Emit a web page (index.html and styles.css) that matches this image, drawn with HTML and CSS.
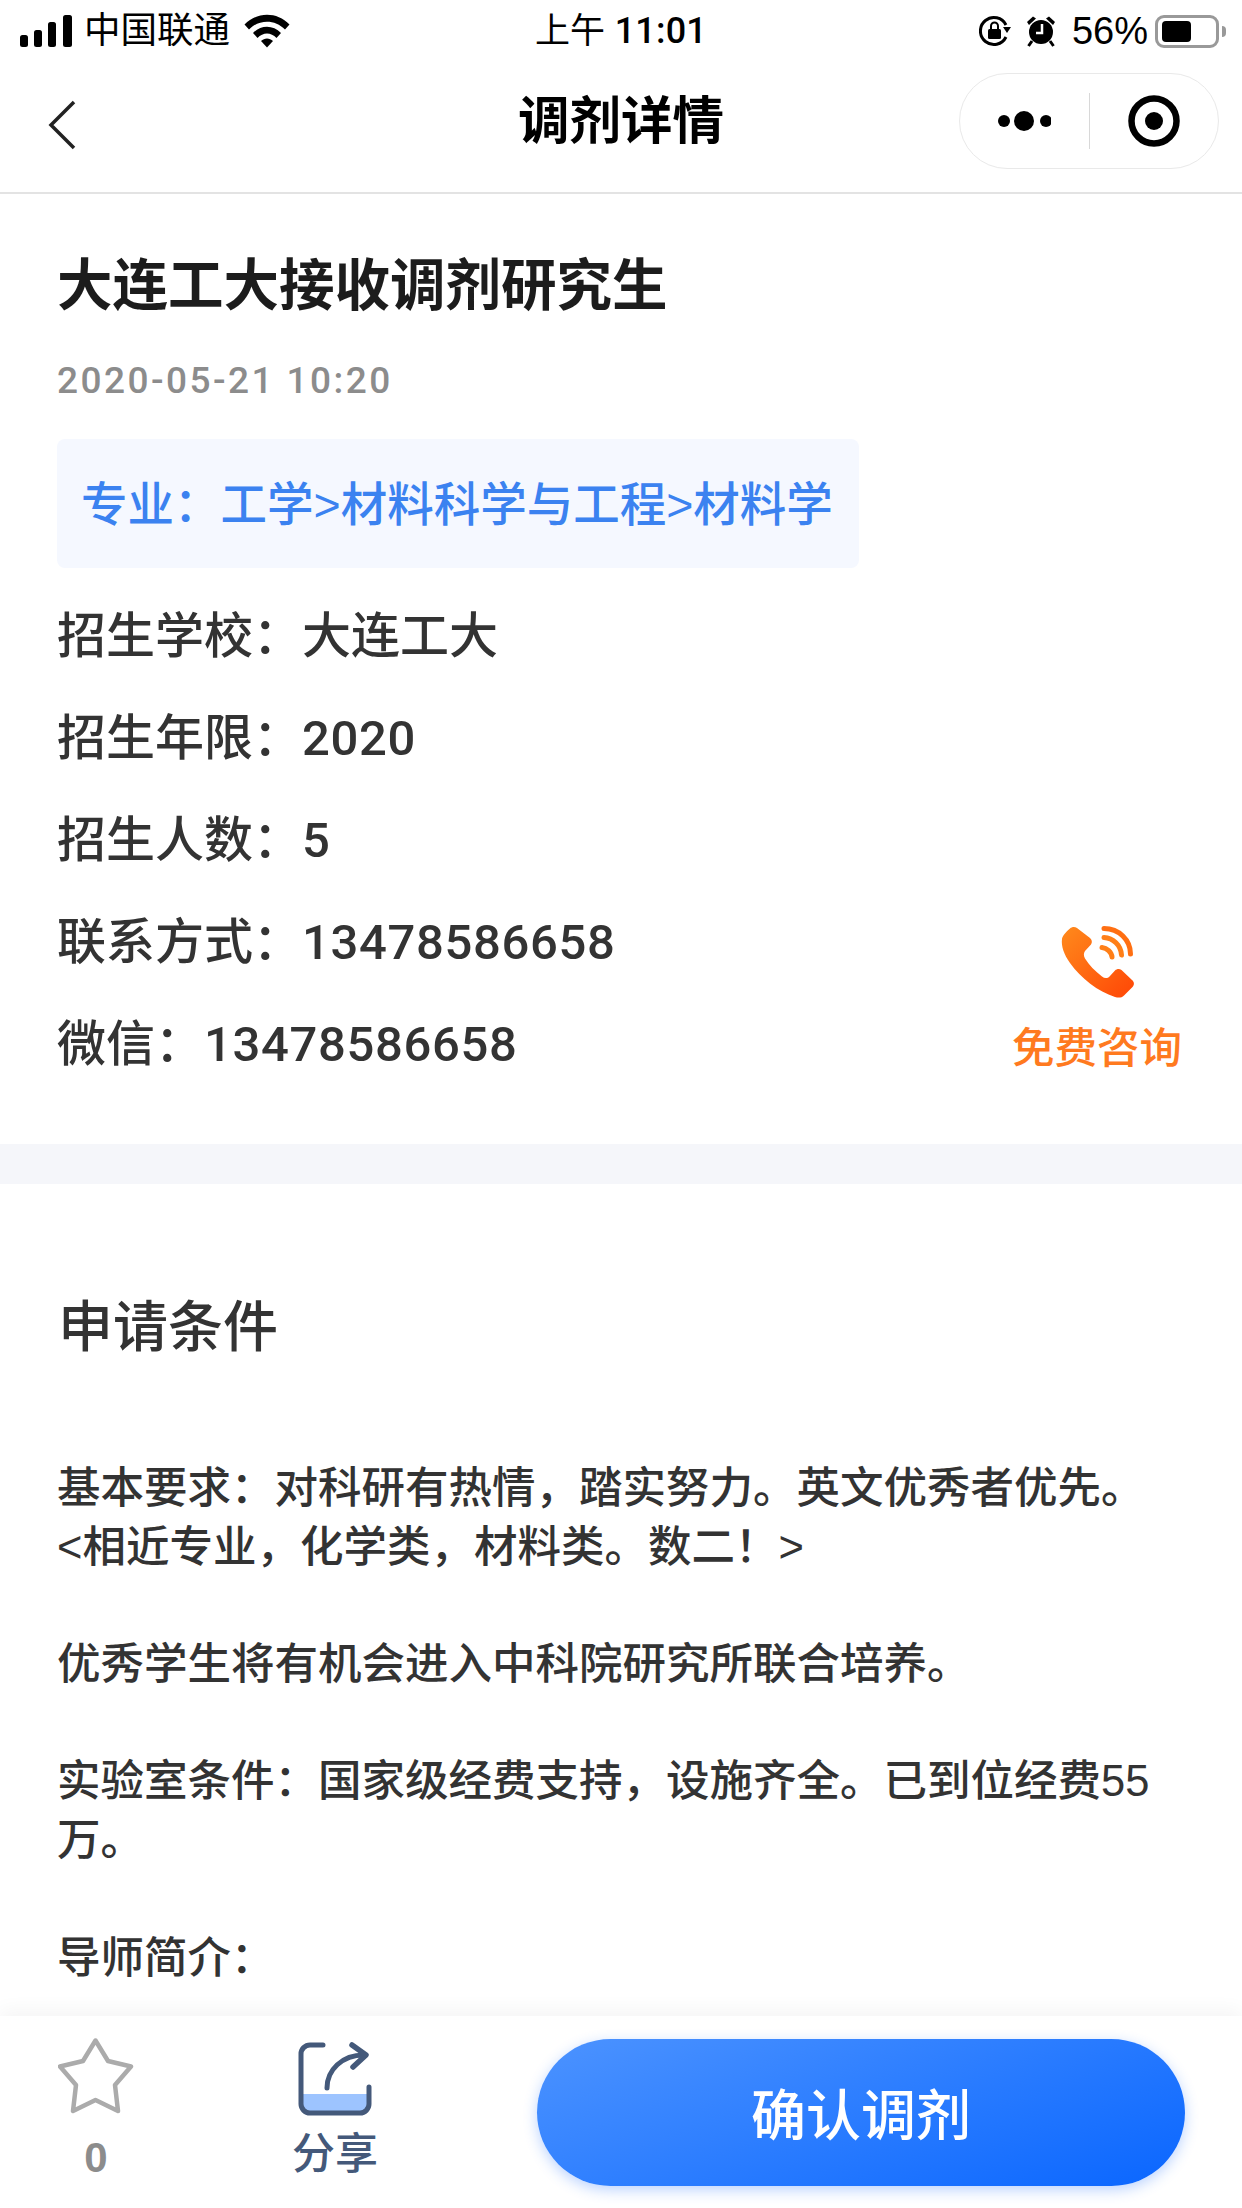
FILE: index.html
```html
<!DOCTYPE html>
<html lang="zh-CN">
<head>
<meta charset="utf-8">
<title>调剂详情</title>
<link rel="stylesheet" href="styles.css">
</head>
<body>
<div class="page">
  <header class="status">
    <div class="status-left">
      <svg class="signal" width="52" height="32" viewBox="0 0 52 32"><rect x="0" y="20" width="8" height="12" rx="2.5"/><rect x="14" y="15" width="8" height="17" rx="2.5"/><rect x="28" y="7" width="8" height="25" rx="2.5"/><rect x="43" y="0" width="9" height="32" rx="2.5"/></svg>
      <span class="carrier">中国联通</span>
      <svg class="wifi" width="46" height="34" viewBox="0 0 46 34"><path d="M0.5 10.5C13 -2.5 33 -2.500 45.500 10.500L41 15.500C31 5 15 5 5 15.500Z"/><path d="M9 19C17 10.500 29 10.500 37 19L32.500 24C27 18 19 18 13.500 24Z"/><path d="M17 27C20.500 23.500 25.500 23.500 29 27L23 33.500Z"/></svg>
    </div>
    <div class="status-time">上午 <b>11:01</b></div>
    <div class="status-right">
      <svg class="lock" width="33" height="32" viewBox="0 0 33 32"><path d="M27 22A13.500 13.500 0 1 1 27 10" fill="none" stroke="#000" stroke-width="3"/><path d="M24 12H32L28 18Z"/><rect x="9" y="14" width="13" height="10" rx="1.500"/><path d="M12 14V11a3.500 3.500 0 0 1 7 0V14" fill="none" stroke="#000" stroke-width="2"/></svg>
      <svg class="alarm" width="30" height="32" viewBox="0 0 30 32"><circle cx="15" cy="17" r="12"/><path d="M1 7L7 1.500L10 3.500L3 10Z"/><path d="M29 7L23 1.500L20 3.500L27 10Z"/><path d="M6 26L2.500 31M24 26L27.500 31" stroke="#000" stroke-width="3"/><path d="M16 9V18H10" fill="none" stroke="#fff" stroke-width="2.500"/></svg>
      <span class="percent">56%</span>
      <div class="battery"><div class="battery-fill"></div></div>
      <div class="battery-nub"></div>
    </div>
  </header>

  <nav class="nav">
    <div class="nav-left">
      <svg width="30" height="52" viewBox="0 0 30 52"><path d="M27 3L4 26L27 49" fill="none" stroke="#222" stroke-width="3.500"/></svg>
    </div>
    <h1 class="nav-title">调剂详情</h1>
    <div class="nav-right">
      <div class="capsule">
        <div class="capsule-side">
          <svg width="54" height="22" viewBox="0 0 54 22"><circle cx="7" cy="11" r="6"/><circle cx="27" cy="11" r="10"/><circle cx="49" cy="11" r="6"/></svg>
        </div>
        <div class="capsule-line"></div>
        <div class="capsule-side">
          <svg width="54" height="54" viewBox="0 0 54 54"><circle cx="27" cy="27" r="22.500" fill="none" stroke="#000" stroke-width="6.500"/><circle cx="27" cy="27" r="9"/></svg>
        </div>
      </div>
    </div>
  </nav>

  <main class="scroll">
    <section class="card">
      <h2 class="title">大连工大接收调剂研究生</h2>
      <div class="date">2020-05-21 10:20</div>
      <div class="tag">专业：工学&gt;材料科学与工程&gt;材料学</div>
      <div class="rows">
        <div class="row">招生学校：大连工大</div>
        <div class="row">招生年限：<span class="num">2020</span></div>
        <div class="row">招生人数：<span class="num">5</span></div>
        <div class="row">联系方式：<span class="num">13478586658</span></div>
        <div class="row">微信：<span class="num">13478586658</span></div>
      </div>
      <div class="consult">
        <svg width="74" height="74" viewBox="0 0 74 74">
          <defs><linearGradient id="ph" x1="0" y1="0" x2="1" y2="1"><stop offset="0" stop-color="#ff8a1c"/><stop offset="1" stop-color="#ff4606"/></linearGradient></defs>
          <path fill="url(#ph)" d="M9 3.500C11 1.500 14 1.500 16 3L29 13C31 15 31.500 17 30 19.500L24 26C22.500 28 22.500 31 24 33.500C28 40 34 46 41 51.500C43.500 53.500 46.500 53.500 48.500 51.500L54 45.500C56 43.500 58.500 43.500 60.500 45L71 55C73.500 57 73.500 60 71.500 62L63 70.500C60.500 73 57.500 73 54 72C37 66.500 20 53.500 9 38C3 29.500 0 21 1 14C1.500 11 4 8 9 3.500Z"/>
          <path d="M43 3.500C58 3.500 69.500 15 69.500 29" fill="none" stroke="#ff6f12" stroke-width="5" stroke-linecap="round"/>
          <path d="M43 12.500C52 13 60 20 60.500 30" fill="none" stroke="#ff7f18" stroke-width="5" stroke-linecap="round"/>
          <path d="M41 22.500C46 23 50.500 27 51 32" fill="none" stroke="#ff7f18" stroke-width="5" stroke-linecap="round"/>
        </svg>
        <div class="consult-label">免费咨询</div>
      </div>
    </section>
    <div class="band"></div>
    <section class="detail">
      <h3 class="detail-title">申请条件</h3>
      <p class="para">基本要求：对科研有热情，踏实努力。英文优秀者优先。<br>&lt;相近专业，化学类，材料类。数二！&gt;</p>
      <p class="para">优秀学生将有机会进入中科院研究所联合培养。</p>
      <p class="para">实验室条件：国家级经费支持，设施齐全。已到位经费55万。</p>
      <p class="para">导师简介：</p>
    </section>
  </main>

  <footer class="bar">
    <div class="action action-star">
      <svg width="76" height="76" viewBox="0 0 76 76"><path d="M37.500 2.500L50 23L73 28.500L57 47L60 73L37.500 62L15 73L18 47L2 28.500L25 23Z" fill="none" stroke="#ababab" stroke-width="4.500" stroke-linejoin="round"/></svg>
      <div class="count">0</div>
    </div>
    <div class="action action-share">
      <svg width="74" height="74" viewBox="0 0 74 74">
        <path d="M3 52H71V62a9 9 0 0 1 -9 9H12a9 9 0 0 1 -9 -9Z" fill="#9dc4ff"/>
        <path d="M25 3H12a9 9 0 0 0 -9 9V62a9 9 0 0 0 9 9H62a9 9 0 0 0 9 -9V45" fill="none" stroke="#44597a" stroke-width="5" stroke-linecap="round"/>
        <path d="M29 46C29 28 44 13 66 13" fill="none" stroke="#44597a" stroke-width="5" stroke-linecap="round"/>
        <path d="M54 3L68 13L55 25" fill="none" stroke="#44597a" stroke-width="5.500" stroke-linecap="round" stroke-linejoin="round"/>
      </svg>
      <div class="share-label">分享</div>
    </div>
    <button class="confirm" type="button">确认调剂</button>
  </footer>
</div>
</body>
</html>
```
FILE: styles.css
```css
* { box-sizing: border-box; }
html, body { margin: 0; padding: 0; }
body {
  font-family: "Liberation Sans", "Noto Sans CJK SC", sans-serif;
  background: #fff;
  color: #333;
}
.page {
  width: 1242px;
  height: 2208px;
  display: flex;
  flex-direction: column;
  overflow: hidden;
}

/* status bar */
.status {
  height: 62px;
  flex: none;
  display: grid;
  grid-template-columns: 1fr auto 1fr;
  align-items: center;
  color: #000;
  font-size: 35px;
}
.status svg { fill: #000; display: block; }
.status-left { display: flex; align-items: center; padding-left: 20px; }
.carrier { margin-left: 12px; font-size: 36.500px; line-height: 40px; }
.wifi { margin-left: 14px; }
.status-time { line-height: 40px; font-size: 35px; }
.status-time b { font-family: Roboto, sans-serif; font-weight: 500; font-size: 36px; letter-spacing: 0.2px; }
.status-right { display: flex; align-items: center; justify-content: flex-end; padding-right: 16px; }
.alarm { margin-left: 14px; }
.percent { margin-left: 16px; font-size: 38px; line-height: 40px; }
.battery {
  margin-left: 7px;
  width: 64px;
  height: 33px;
  border: 3px solid #999;
  border-radius: 9px;
  padding: 3px 4px;
}
.battery-fill { width: 29px; height: 21px; background: #000; border-radius: 4px; }
.battery-nub { margin-left: 3px; width: 4px; height: 11px; background: #999; border-radius: 0 4px 4px 0; }

/* nav */
.nav {
  height: 132px;
  flex: none;
  display: grid;
  grid-template-columns: 1fr auto 1fr;
  align-items: center;
  padding-bottom: 12px;
  border-bottom: 2px solid #e3e3e3;
}
.nav-left { padding-left: 47px; padding-top: 8px; display: flex; }
.nav-left svg { display: block; }
.nav-title { margin: 0; font-size: 51.500px; font-weight: 700; line-height: 70px; color: #000; }
.nav-right { display: flex; justify-content: flex-end; padding-right: 23px; }
.capsule {
  width: 260px;
  height: 96px;
  border: 1px solid #e9e9e9;
  border-radius: 48px;
  display: flex;
  align-items: center;
}
.capsule-side { flex: 1; display: flex; justify-content: center; align-items: center; }
.capsule-side svg { display: block; }
.capsule-line { width: 1px; height: 56px; background: #d8d8d8; }

/* main */
.scroll { flex: 1; min-height: 0; overflow: hidden; }
.card { position: relative; padding: 57px 57px 49px; }
.title { margin: 0; font-size: 55.500px; line-height: 70px; font-weight: 700; color: #1c1c1c; }
.date { margin-top: 35px; font-family: Roboto, sans-serif; font-weight: 500; font-size: 37px; line-height: 50px; letter-spacing: 2.450px; color: #8c8c8c; }
.tag {
  display: table;
  margin-top: 33px;
  height: 129px;
  line-height: 126px;
  padding: 3px 26px 0 24px;
  font-size: 46.500px;
  font-weight: 500;
  color: #3b82f0;
  background: #f5f8ff;
  border-radius: 8px;
}
.rows { margin-top: 17px; }
.row { height: 102px; line-height: 102px; font-size: 49px; font-weight: 500; color: #333; }
.num { font-family: Roboto, sans-serif; letter-spacing: 0.650px; font-weight: 500; }
.consult {
  position: absolute;
  left: 1012px;
  top: 731px;
  width: 170px;
  display: flex;
  flex-direction: column;
  align-items: center;
}
.consult svg { display: block; margin-left: 1px; }
.consult-label { margin-top: 22px; font-size: 42.500px; line-height: 56px; font-weight: 500; color: #ff7a1f; white-space: nowrap; }
.band { height: 40px; background: #f5f6fa; }
.detail { padding: 108px 57px 0; }
.detail-title { margin: 0 0 97px 1px; font-size: 55px; line-height: 70px; font-weight: 500; color: #333; }
.para { margin: 0 0 58.700px; font-size: 43.500px; line-height: 58.700px; font-weight: 500; color: #333; }

/* bottom bar */
.bar {
  position: relative;
  height: 192px;
  flex: none;
  display: flex;
  align-items: flex-start;
  padding: 22px 57px 0 58px;
  background: #fff;
  box-shadow: 0 -6px 18px rgba(0, 0, 0, 0.045);
}
.action { display: flex; flex-direction: column; align-items: center; }
.action svg { display: block; }
.action-star { width: 76px; }
.count { margin-top: 20px; font-size: 42px; line-height: 48px; font-weight: 700; color: #8c8c8c; }
.action-share { width: 84px; margin-left: 159px; padding-top: 4px; }
.share-label { margin-top: 8px; font-size: 43px; line-height: 60px; font-weight: 500; color: #44597a; white-space: nowrap; }
.confirm {
  margin-left: auto;
  margin-top: 1px;
  width: 648px;
  height: 147px;
  padding: 0 0 4px;
  border: 0;
  border-radius: 74px;
  background: linear-gradient(160deg, #4c93ff 0%, #0a66ff 100%);
  box-shadow: 0 4px 14px rgba(30, 110, 255, 0.3);
  color: #fff;
  font-family: inherit;
  font-size: 55px;
  font-weight: 500;
}
```
